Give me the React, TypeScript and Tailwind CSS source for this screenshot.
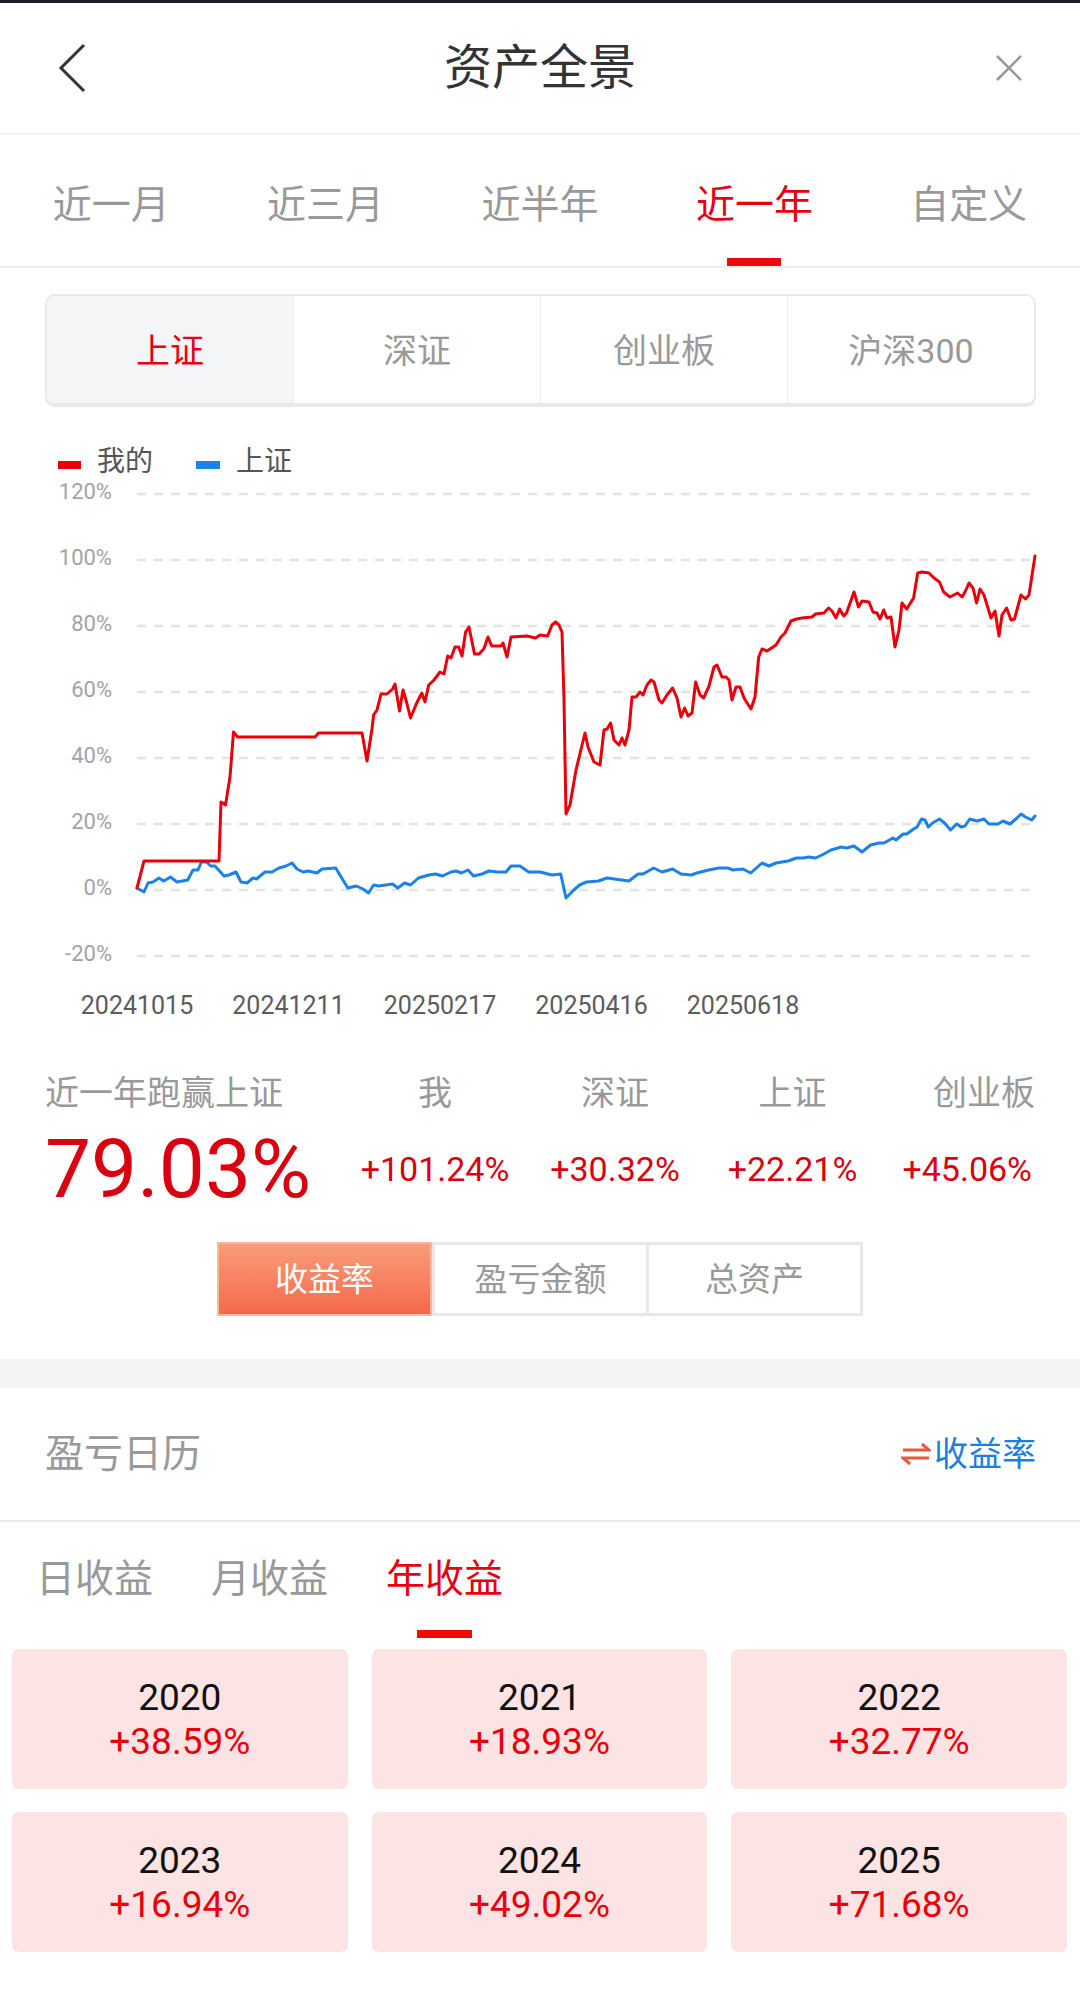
import React from "react"

const red: number[][] = [[137,888],[144,861],[219,861],[221,802],[225.5,805],[230,777],[233.5,732],[237.6,737],[315,737],[318.5,733],[362,733],[367,761],[372,729],[373.6,715],[377,710],[381,694],[387,694],[392.6,689],[395,684],[399.5,711],[403,690],[406,700],[410.5,718],[416.7,703],[421.8,693],[425,702],[428.7,685],[434,680],[440,672],[444,674],[447.7,656],[451,658],[455,647],[458.7,647],[462,656],[465.6,632],[469,627],[474.5,654],[479,654],[483.8,649],[488,637],[491.7,646],[501,646],[503,643],[507,657],[511,637],[527,636],[535.5,638],[540,635],[547.6,636],[552,625],[555.5,622],[559,625],[562,632],[564,700],[566,814],[570,805],[576,770],[585,733],[588,747],[594,762],[600,765],[604,730],[607,729],[610.6,723],[614,740],[619,745],[622,738],[625,745],[629,730],[632,697],[636,697],[640,692],[643,695],[647,685],[651,680],[654,682],[659,700],[662,703],[667,695],[672.6,688],[677,698],[681,717],[684.6,708],[688,716],[692,713],[695.6,682],[700,695],[703.6,698],[708.7,687],[714,667],[717,665],[722,677],[726,677],[729,680],[732,700],[736,687],[740,687],[744,698],[751,709],[755,697],[758.7,657],[762,649],[767,651],[776,645],[781,637],[785,633],[791,621],[796.5,619],[802,618],[812,617],[815.5,614],[824,613],[828.6,608],[832,611],[836,618],[839.6,609],[843.7,616],[846.5,613],[854,592],[858.5,607],[862,601],[869,602],[873,612],[877,613],[880,619],[883.7,610],[887,618],[891,617],[895,647],[899,630],[902,603],[906.7,609],[913.6,598],[917.7,573],[922,572],[929,573],[934,578],[939.5,582],[943.6,592],[950,597],[957.6,593],[962,597],[965,592],[969,583],[973,588],[976.6,603],[980,589],[984,595],[991,618],[995,611],[999,636],[1002,615],[1006.6,608],[1011,620],[1014.5,619],[1021,595],[1025.5,599],[1029,595],[1035,556]]

const blue: number[][] = [[137,888],[140.5,890],[144,892],[148,883],[153,882],[159,878],[163.6,881],[170.5,877],[177,882],[182.5,881],[187.7,880],[193,870],[198,870],[201.4,862],[206.6,862],[210.7,866],[215,866],[224,876],[229,875],[236,872],[241,882],[247,883],[253,878],[256.5,879],[265,872],[272,872],[279,868],[286,866],[292,863],[297,869],[303,872],[308,871],[317,873],[322,869],[335.7,868],[347.8,888],[356.4,886],[363,889],[368.5,893],[373.6,885],[378.8,886],[392.6,884],[397.7,888],[404.6,883],[410.5,885],[418.4,878],[428.7,875],[435.6,874],[442.5,876],[451,872],[456,871],[461.4,873],[468,870],[473.5,876],[482,874],[489,871],[497.6,872],[506,872],[511,866],[520,866],[528.6,872],[540,872],[552,875],[560.7,874],[566,898],[572.7,891],[579.6,885],[586.5,882],[598.5,881],[607,878],[629,881],[638,874],[643,874],[653.6,868],[662,872],[672.6,869],[681,874],[691.5,875],[696.7,873],[708.7,870],[719,868],[727.7,868],[733,870],[743,869],[750.7,873],[762,863],[769,866],[776,863],[788,861],[796.5,858],[803.4,858],[808.6,857],[815.5,858],[822,855],[831,850],[838,848],[841,847],[846.5,848],[854,846],[862,852],[870.6,845],[879,843],[884,843],[893,838],[896,840],[903,834],[906.7,834],[913.6,829],[917,827],[921.5,819],[925,820],[928.4,827],[932.6,823],[939.5,819],[944.6,823],[950.5,830],[956.7,824],[961,827],[965,826],[969.8,819],[977,821],[984,819],[989,824],[998,824],[1003,821],[1010,824],[1017,818],[1021,814],[1025.5,817],[1031.7,820],[1035,816]]

const toPts = (arr: number[][]) => arr.map((p) => p.join(",")).join(" ")

const periods = ["近一月", "近三月", "近半年", "近一年", "自定义"]
const indexes = ["上证", "深证", "创业板", "沪深300"]
const yLabels = ["120%", "100%", "80%", "60%", "40%", "20%", "0%", "-20%"]
const xLabels = ["20241015", "20241211", "20250217", "20250416", "20250618"]

const years = [
  { year: "2020", pct: "+38.59%" },
  { year: "2021", pct: "+18.93%" },
  { year: "2022", pct: "+32.77%" },
  { year: "2023", pct: "+16.94%" },
  { year: "2024", pct: "+49.02%" },
  { year: "2025", pct: "+71.68%" },
]

function Chart() {
  return (
    <svg width="1080" height="590" viewBox="0 440 1080 590" className="block mt-[33px]">
      {/* legend */}
      <rect x="58" y="461" width="23" height="8" fill="#e8000b" />
      <text x="97" y="464" fontSize="28" fill="#555" dominantBaseline="middle">我的</text>
      <rect x="196" y="461" width="24" height="8" fill="#1a82e8" />
      <text x="236" y="464" fontSize="28" fill="#555" dominantBaseline="middle">上证</text>

      {yLabels.map((l, i) => {
        const y = 494 + i * 66
        return (
          <g key={l}>
            <line x1="137" y1={y} x2="1035" y2={y} stroke="#e3e3e3" strokeWidth="2.5" strokeDasharray="9 8" />
            <text x="112" y={y - 1} fontSize="22" fill="#a3a3a3" textAnchor="end" dominantBaseline="middle">{l}</text>
          </g>
        )
      })}

      {xLabels.map((l, i) => (
        <text key={l} x={137 + i * 151.5} y="1007" fontSize="25" fill="#5c5c5c" textAnchor="middle" dominantBaseline="middle">{l}</text>
      ))}

      <polyline points={toPts(blue)} fill="none" stroke="#1a82e8" strokeWidth="3" strokeLinejoin="round" strokeLinecap="round" />
      <polyline points={toPts(red)} fill="none" stroke="#e8000b" strokeWidth="3" strokeLinejoin="round" strokeLinecap="round" />
    </svg>
  )
}

export default function App() {
  return (
    <div className="w-[1080px] min-h-[1992px] bg-white font-['Roboto','Noto_Sans_CJK_SC',sans-serif]">
      <div className="h-[3px] bg-[#1c1c24]" />

      {/* header */}
      <div className="h-[132px] grid grid-cols-[1fr_auto_1fr] items-center border-b-2 border-[#f2f2f2]">
        <div className="pl-[58px]">
          <svg width="30" height="50" viewBox="0 0 30 50">
            <path d="M26 2 L3 25 L26 48" fill="none" stroke="#333" strokeWidth="3" />
          </svg>
        </div>
        <div className="text-[48px] leading-none text-[#333]">资产全景</div>
        <div className="flex justify-end pr-[57px]">
          <svg width="28" height="28" viewBox="0 0 28 28">
            <path d="M2 2 L26 26 M26 2 L2 26" stroke="#999" strokeWidth="2.5" />
          </svg>
        </div>
      </div>

      {/* period tabs */}
      <div className="h-[133px] px-[4px] flex border-b-2 border-[#eee]">
        {periods.map((p) => {
          const active = p === "近一年"
          return (
            <div key={p} className="flex-1 flex flex-col items-center justify-end">
              <div className={`text-[39px] leading-none mb-[33px] ${active ? "text-[#e60012]" : "text-[#999]"}`}>{p}</div>
              <div className={`h-[8px] w-[54px] ${active ? "bg-[#ee0a0a]" : ""}`} />
            </div>
          )
        })}
      </div>

      {/* index selector */}
      <div className="mt-[26px] ml-[45px] mr-[44px] h-[113px] flex rounded-[10px] border-2 border-b-4 border-[#e8e9eb] overflow-hidden">
        {indexes.map((s, i) => (
          <div
            key={s}
            className={`flex-1 flex items-center justify-center pt-[3px] text-[34px] leading-none ${
              i === 0 ? "bg-[#f4f5f7] text-[#e60012]" : "bg-white text-[#999] border-l border-[#eeeeee]"
            }`}
          >
            {s}
          </div>
        ))}
      </div>

      <Chart />

      {/* summary */}
      <div className="mt-[46px] pl-[45px] pr-[45px] grid grid-cols-[300px_180px_180px_175px_1fr] gap-y-[18px] items-center">
        <div className="text-[34px] leading-none text-[#999]">近一年跑赢上证</div>
        <div className="text-[34px] leading-none text-[#999] text-center">我</div>
        <div className="text-[34px] leading-none text-[#999] text-center">深证</div>
        <div className="text-[34px] leading-none text-[#999] text-center">上证</div>
        <div className="text-[34px] leading-none text-[#999] text-right">创业板</div>

        <div className="h-[82px] text-[82px] leading-none text-[#d9000f]">79.03%</div>
        <div className="text-[34px] leading-none text-[#d9000f] text-center">+101.24%</div>
        <div className="text-[34px] leading-none text-[#d9000f] text-center">+30.32%</div>
        <div className="text-[34px] leading-none text-[#d9000f] text-center">+22.21%</div>
        <div className="text-[34px] leading-none text-[#d9000f] text-right pr-[3px]">+45.06%</div>
      </div>

      {/* mode toggle */}
      <div className="mt-[32px] mx-auto w-[646px] h-[74px] flex">
        <div className="flex-1 flex items-center justify-center text-[33px] leading-none text-white bg-gradient-to-b from-[#f89c79] to-[#f4684a] border-2 border-[#f9b79d]">
          收益率
        </div>
        <div className="flex-1 flex items-center justify-center text-[33px] leading-none text-[#999] border-[3px] border-[#e8e8e8]">
          盈亏金额
        </div>
        <div className="flex-1 flex items-center justify-center text-[33px] leading-none text-[#999] border-[3px] border-l-0 border-[#e8e8e8]">
          总资产
        </div>
      </div>

      <div className="mt-[43px] h-[29px] bg-[#f4f4f4]" />

      {/* calendar header */}
      <div className="h-[134px] pr-[44px] pl-[45px] flex items-center justify-between border-b-2 border-[#eaeaea]">
        <div className="text-[39px] leading-none text-[#999]">盈亏日历</div>
        <div className="flex items-center gap-[3px]">
          <svg width="30" height="26" viewBox="0 0 30 26">
            <path d="M2 9 H28 L21 3 M28 17 H2 L9 23" fill="none" stroke="#e9573f" strokeWidth="3" />
          </svg>
          <span className="text-[34px] leading-none text-[#1a7fe0]">收益率</span>
        </div>
      </div>

      {/* sub tabs */}
      <div className="pt-[38px] pl-[36px] flex gap-[58px]">
        {["日收益", "月收益", "年收益"].map((t) => {
          const active = t === "年收益"
          return (
            <div key={t} className="flex flex-col items-center">
              <div className={`text-[39px] leading-none ${active ? "text-[#e60012]" : "text-[#999]"}`}>{t}</div>
              <div className={`mt-[31px] h-[8px] w-[55px] ${active ? "bg-[#ee0a0a]" : ""}`} />
            </div>
          )
        })}
      </div>

      {/* year cards */}
      <div className="mt-[11px] pl-[12px] pr-[13px] grid grid-cols-3 gap-x-[24px] gap-y-[23px]">
        {years.map((y) => (
          <div key={y.year} className="h-[140px] rounded-[7px] bg-[#fde4e4] flex flex-col items-center justify-center gap-[7px]">
            <div className="text-[37px] leading-none text-[#111]">{y.year}</div>
            <div className="text-[37px] leading-none text-[#e8000b]">{y.pct}</div>
          </div>
        ))}
      </div>
    </div>
  )
}
